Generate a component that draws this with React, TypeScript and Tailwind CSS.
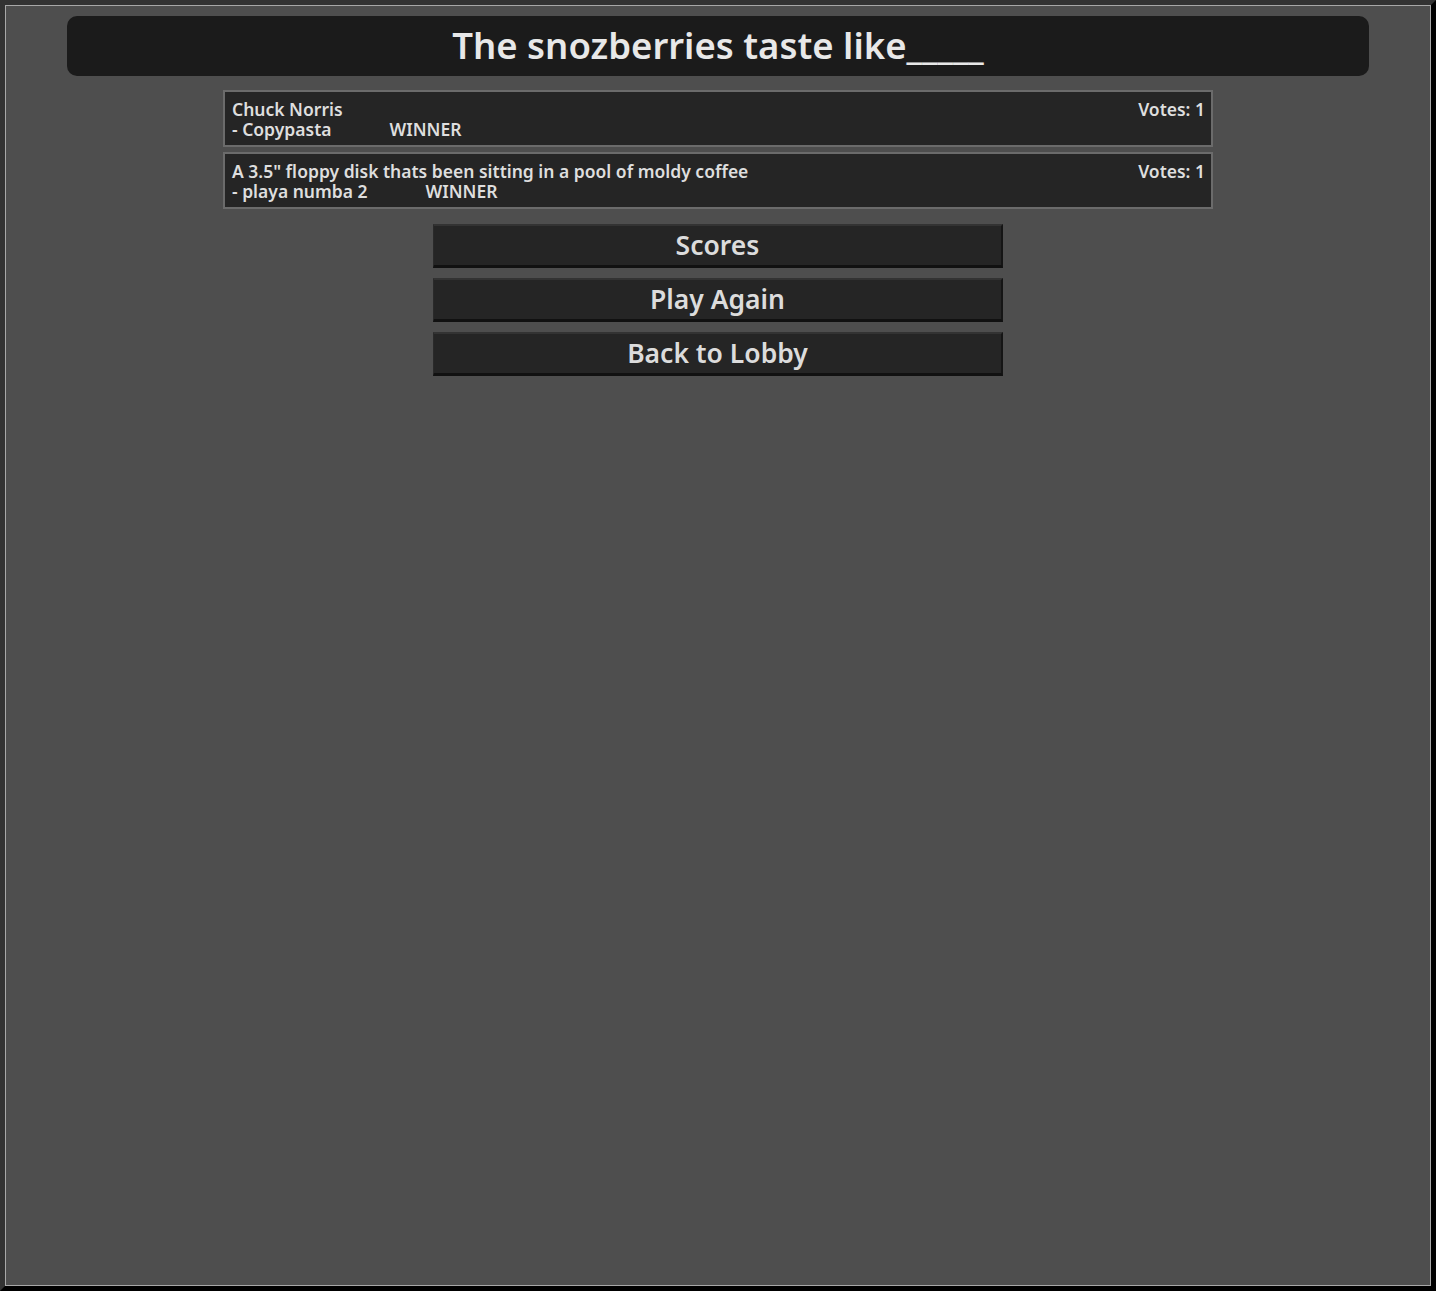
const answers = [
	{text: "Chuck Norris", author: "Copypasta", votes: 1, winner: true},
	{
		text: 'A 3.5" floppy disk thats been sitting in a pool of moldy coffee',
		author: "playa numba 2",
		votes: 1,
		winner: true,
	},
];

function AnswerCard({text, author, votes, winner}: (typeof answers)[number]) {
	return (
		<div className="w-[990px] h-[57px] mx-auto bg-[#252525] border-2 border-[#6b6b6b] pl-[7px] pr-[6px] pt-[7px] flex text-[17.5px] leading-[20px] font-semibold text-[#dedede]">
			<div className="flex-1">
				<div className="h-[20px]">{text}</div>
				<div className="h-[20px]">
					- {author}
					{winner && <span className="ml-[58px]">WINNER</span>}
				</div>
			</div>
			<div className="h-[20px]">Votes: {votes}</div>
		</div>
	);
}

function MenuButton({label}: {label: string}) {
	return (
		<button className="w-[570px] h-[44px] mx-auto block bg-[#252525] border-t-2 border-t-[#333] border-b-[3px] border-b-[#111] border-r-2 border-r-[#151515] border-l border-l-[#2a2a2a] text-[26.5px] leading-none font-semibold text-[#dcdcdc]">
			{label}
		</button>
	);
}

export default function App() {
	return (
		<div
			className="h-[1291px] w-full border-t-[5px] border-l-[5px] border-t-[#333] border-l-[#333] border-b-[5px] border-r-[5px] border-b-black border-r-black"
			style={{fontFamily: "'Noto Sans', Lato, sans-serif"}}
		>
			<div className="h-full border border-[#a8a8a8] bg-[#4e4e4e] pt-[10px]">
				<div className="mx-[61px] h-[60px] rounded-[10px] bg-[#1b1b1b] flex items-center justify-center pb-[2px]">
					<h1 className="text-[36.5px] leading-none font-semibold text-[#e8e8e8]">The snozberries taste like_____</h1>
				</div>
				<div className="mt-[14px] flex flex-col gap-[5px]">
					{answers.map((a, i) => (
						<AnswerCard key={i} {...a} />
					))}
				</div>
				<div className="mt-[15px] flex flex-col gap-[10px]">
					<MenuButton label="Scores" />
					<MenuButton label="Play Again" />
					<MenuButton label="Back to Lobby" />
				</div>
			</div>
		</div>
	);
}
